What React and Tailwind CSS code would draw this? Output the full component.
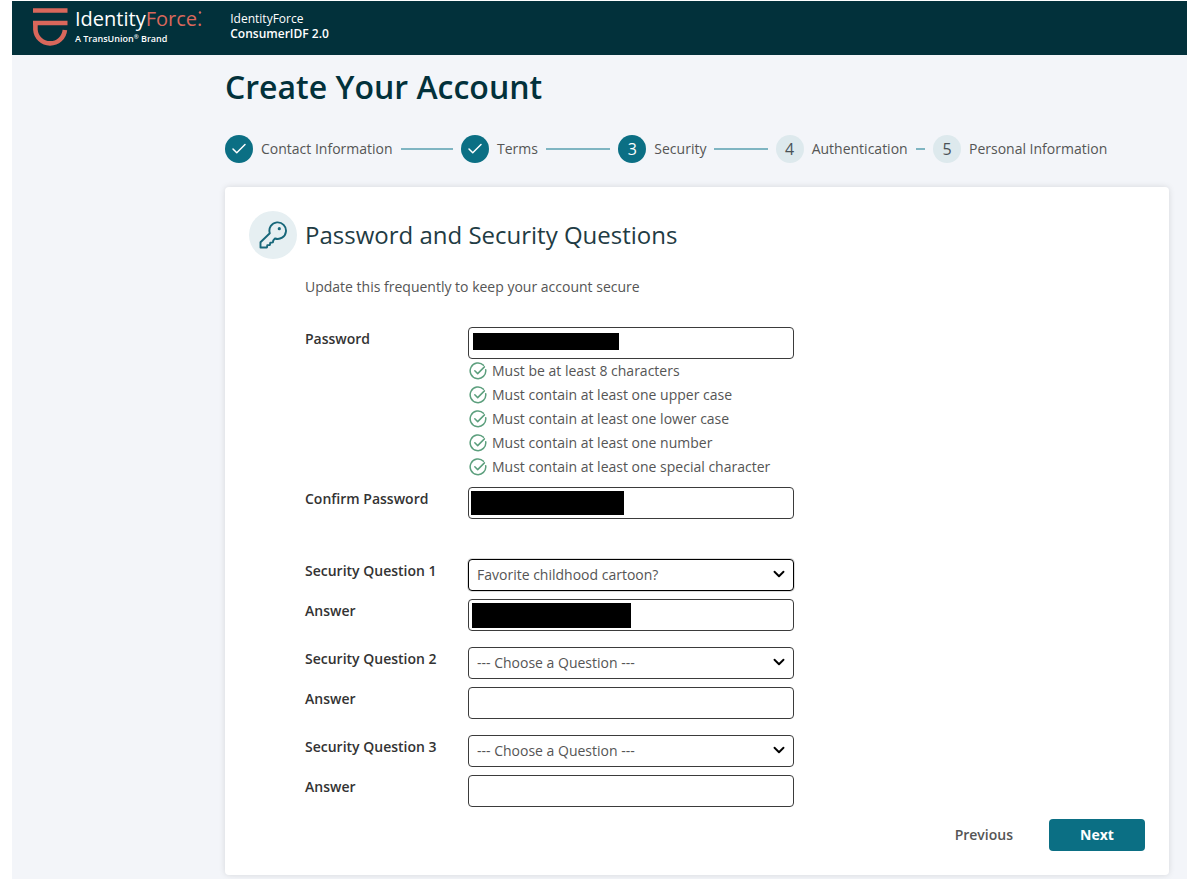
import React from 'react';
import { Check, ChevronDown } from 'lucide-react';
import clsx from 'clsx';

const steps = [
    { label: 'Contact Information', status: 'done' },
    { label: 'Terms', status: 'done' },
    { label: 'Security', status: 'current' },
    { label: 'Authentication', status: 'todo' },
    { label: 'Personal Information', status: 'todo' },
];

const passwordRules = [
    'Must be at least 8 characters',
    'Must contain at least one upper case',
    'Must contain at least one lower case',
    'Must contain at least one number',
    'Must contain at least one special character',
];

const Logo = () => (
    <a href="#" className="flex items-start gap-[7px]">
        <svg viewBox="0 0 35 40" className="mt-[7px] h-10 w-[35px]" fill="none" stroke="#d9675b" aria-hidden="true">
            <path d="M0 2.500h34.500M0 15h34.500" strokeWidth="4.600" />
            <path d="M2.400 15v6.600a14.800 14.800 0 0 0 29.500.4" strokeWidth="4.600" />
        </svg>
        <span className="flex flex-col pt-1.5 text-white">
            <span className="flex text-xl leading-6">
                Identity<span className="text-[#d9675b]">Force.</span>
                <svg viewBox="0 0 4 24" className="-ml-1 h-6 w-1" aria-hidden="true"><circle cx="2" cy="5.500" r="1.200" fill="#d9675b" /></svg>
            </span>
            <span className="text-[9px] leading-4 font-semibold">A TransUnion<sup className="text-[6px]">®</sup> Brand</span>
        </span>
    </a>
);

const KeyIcon = () => (
    <svg viewBox="0 0 28 28" className="size-7" fill="none" stroke="#17677a" strokeWidth="1.900" strokeLinejoin="round" aria-hidden="true">
        <path d="M1.500 26.500v-5.300L10.800 12.200A8.300 8.300 0 1 1 16 17.500l-1.700 1.800-.4 2.100-2.600.3-.5 2.300-2.500.1-.3 2.400z" />
        <circle cx="20.300" cy="7.700" r="1.600" fill="#17677a" stroke="none" />
    </svg>
);

const RuleIcon = () => (
    <svg viewBox="0 0 18 18" className="size-[18px]" fill="none" stroke="#5c9f7d" strokeWidth="1.500" strokeLinecap="round" strokeLinejoin="round" aria-hidden="true">
        <path d="M14.500 3.300A7.800 7.800 0 1 0 16.700 7.700" />
        <path d="M5.800 8.700l2.900 2.900 6.700-6.700" />
    </svg>
);

const Step = ({ number, label, status, last }) => (
    <li className="flex items-center gap-2">
        <span className={clsx('flex size-7 shrink-0 items-center justify-center rounded-full text-base', status === 'todo' ? 'bg-[#dde9ed] text-[#4a5257]' : 'bg-[#0b6f84] text-white')}>
            {status === 'done' ? <Check size={18} strokeWidth={2} /> : number}
        </span>
        <span className="whitespace-nowrap">{label}</span>
        {!last && <span className="mr-2 h-0.5 flex-1 bg-[#7fb5c2]" />}
    </li>
);

const Field = ({ id, label, children }) => (
    <div className="flex items-start">
        <label htmlFor={id} className="w-[163px] shrink-0 leading-6 font-semibold text-[#333]">{label}</label>
        <div className="relative max-w-[326px] flex-1">{children}</div>
    </div>
);

const inputClass = 'block h-8 w-full rounded border border-[#3b3b3b] bg-white px-2 outline-none';

const TextField = ({ id, label, type = 'text', mask, children }) => (
    <Field id={id} label={label}>
        <input id={id} type={type} className={inputClass} />
        {mask && <span className={clsx('pointer-events-none absolute bg-black', mask)} />}
        {children}
    </Field>
);

const SelectField = ({ id, label, value, active }) => (
    <Field id={id} label={label}>
        <select id={id} defaultValue={value} className={clsx(inputClass, 'appearance-none', active && 'border-black shadow-[0_0_0_1px_#ddd]')}>
            <option>{value}</option>
        </select>
        <ChevronDown size={18} strokeWidth={2.5} className="pointer-events-none absolute top-1.5 right-1.5 text-black" />
    </Field>
);

const App = () => (
    <div className="flex min-h-screen flex-col bg-white pt-px pr-[13px] pl-3 font-['Open_Sans','Noto_Sans',sans-serif] text-sm text-[#555]">
        <header className="flex h-[54px] items-start gap-7 bg-[#02313b] pl-[21px]">
            <Logo />
            <div className="pt-2.5 text-xs leading-[15px] text-white">
                <p className="font-medium">IdentityForce</p>
                <p className="font-semibold">ConsumerIDF 2.0</p>
            </div>
        </header>
        <main className="flex-1 bg-[#f3f5f9] pt-3 pr-[18px] pl-[213px]">
            <h1 className="text-[32px] leading-10 font-semibold text-[#02313b]">Create Your Account</h1>
            <ol className="mt-7 grid grid-cols-[3fr_2fr_2fr_2fr_3fr]">
                {steps.map((step, i) => (
                    <Step key={step.label} number={i + 1} last={i === steps.length - 1} {...step} />
                ))}
            </ol>
            <section className="mt-6 rounded bg-white p-6 shadow-[0_0_6px_rgba(0,0,0,0.12)]">
                <div className="flex items-center gap-2">
                    <span className="flex size-12 items-center justify-center rounded-full bg-[#e6eff2]"><KeyIcon /></span>
                    <h2 className="text-2xl text-[#1f3c44]">Password and Security Questions</h2>
                </div>
                <form className="pl-14" onSubmit={(e) => e.preventDefault()}>
                    <p className="mt-4 leading-6">Update this frequently to keep your account secure</p>
                    <div className="mt-7 flex flex-col gap-2">
                        <TextField id="password" label="Password" type="password" mask="top-1.5 left-[5px] h-[17px] w-[146px]">
                            <ul>
                                {passwordRules.map((rule) => (
                                    <li key={rule} className="flex items-center gap-[5px] pl-px leading-6"><RuleIcon />{rule}</li>
                                ))}
                            </ul>
                        </TextField>
                        <TextField id="confirm" label="Confirm Password" type="password" mask="top-1 left-[3px] h-6 w-[153px]" />
                    </div>
                    <div className="mt-10 flex flex-col gap-4">
                        <div className="flex flex-col gap-2">
                            <SelectField id="question1" label="Security Question 1" value="Favorite childhood cartoon?" active />
                            <TextField id="answer1" label="Answer" mask="top-1 left-1 h-[25px] w-[159px]" />
                        </div>
                        {[2, 3].map((n) => (
                            <div key={n} className="flex flex-col gap-2">
                                <SelectField id={`question${n}`} label={`Security Question ${n}`} value="--- Choose a Question ---" />
                                <TextField id={`answer${n}`} label="Answer" />
                            </div>
                        ))}
                    </div>
                    <div className="mt-3 flex justify-end gap-5">
                        <button type="button" className="h-8 px-4 font-semibold">Previous</button>
                        <button type="submit" className="h-8 w-24 rounded bg-[#0b6f84] font-bold text-white">Next</button>
                    </div>
                </form>
            </section>
        </main>
    </div>
);

export default App;
